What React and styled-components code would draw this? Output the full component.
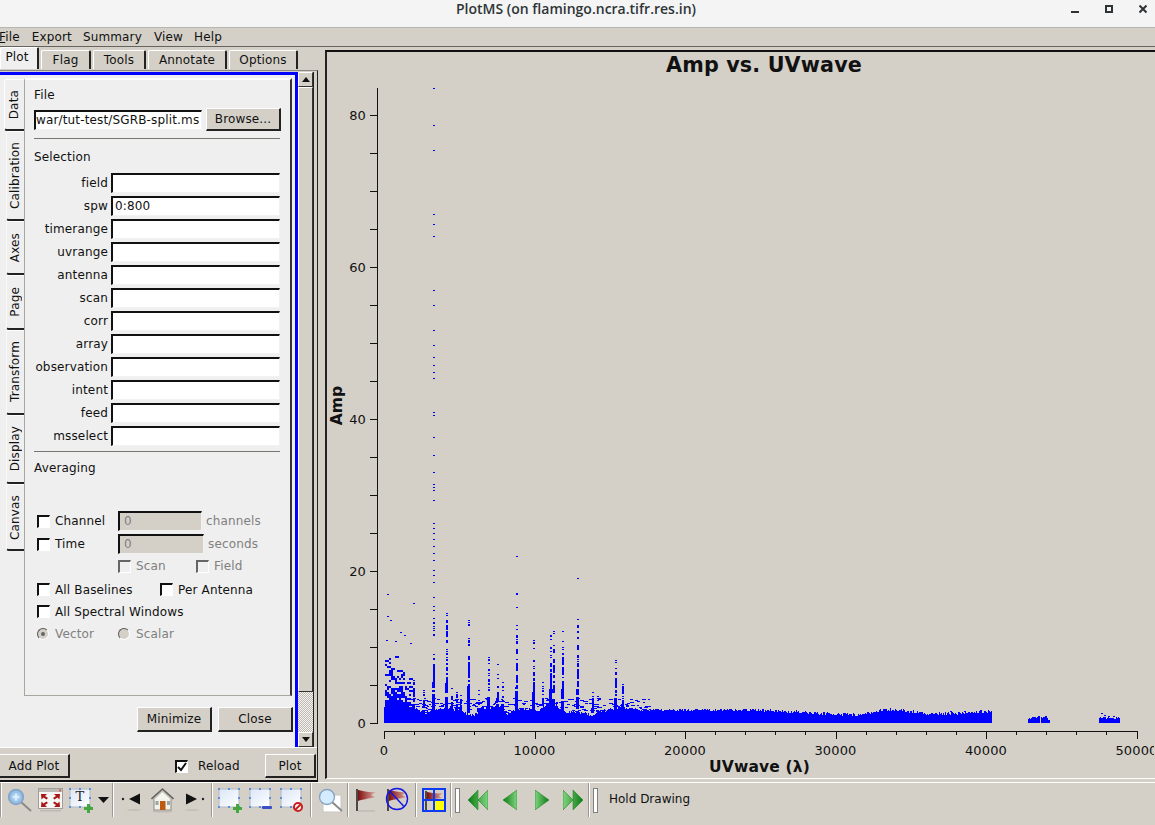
import React from 'react';
import styled, { createGlobalStyle } from 'styled-components';

const Global = createGlobalStyle`
  html, body { margin: 0; padding: 0; background: #d4d0c8; }
  * { box-sizing: border-box; }
`;

const Win = styled.div`
  width: 1155px;
  height: 825px;
  overflow: hidden;
  display: flex;
  flex-direction: column;
  background: #d4d0c8;
  color: #111;
  font: 12px/16px "DejaVu Sans", sans-serif;
  letter-spacing: 0.15px;
`;
const TitleBar = styled.div`
  height: 28px;
  flex: none;
  position: relative;
  background: #f4f4f4;
  border-bottom: 1px solid #b8b6b2;
  display: flex;
  align-items: center;
  justify-content: center;
  padding-bottom: 9px;
  padding-right: 3px;
  font: 600 14px/18px "Open Sans", "Noto Sans", sans-serif;
  letter-spacing: 0;
  color: #2e3436;
`;
const WinControls = styled.div`
  position: absolute;
  right: 8px;
  top: 5px;
  display: flex;
  gap: 26px;
`;
const MenuBar = styled.div`
  height: 19px;
  flex: none;
  display: flex;
  border-bottom: 1px solid #66645f;
  line-height: 18px;
`;
const MenuItem = styled.span`
  margin-left: ${(p) => p.$ml}px;
  u { text-decoration-thickness: 1px; }
`;
const Main = styled.div`
  height: 735px;
  flex: none;
  display: flex;
`;
const LeftCol = styled.div`
  width: 318px;
  flex: none;
  display: flex;
  flex-direction: column;
  border-bottom: 2px solid #111;
`;
const TabStrip = styled.div`
  height: 23px;
  flex: none;
  display: flex;
  align-items: flex-end;
  padding-bottom: 1px;
`;
const HTab = styled.div`
  width: ${(p) => p.$w}px;
  margin-right: 2px;
  height: ${(p) => (p.$active ? 22 : 19)}px;
  background: ${(p) => (p.$active ? '#efefef' : '#d4d0c8')};
  border-top: 1px solid #fff;
  border-left: 1px solid #fff;
  border-right: 2px solid #222;
  border-top-left-radius: 2px;
  border-top-right-radius: 2px;
  text-align: center;
  line-height: 18px;
  padding-bottom: ${(p) => (p.$active ? 3 : 0)}px;
  padding-right: ${(p) => (p.$active ? 4 : 0)}px;
`;
const PlotTabBody = styled.div`
  flex: 1;
  min-height: 0;
  border-top: 1px solid #8a8882;
  border-right: 1px solid #222;
  display: flex;
  flex-direction: column;
`;
const ScrollArea = styled.div`
  height: 675px;
  flex: none;
  display: flex;
  margin-top: 1px;
  margin-right: 3px;
`;
const Viewport = styled.div`
  width: 298px;
  flex: none;
  border-top: 3px solid #0000ff;
  border-right: 3px solid #0000ff;
  background: #efefef;
  display: flex;
  flex-direction: column;
  padding: 3px 3px 0 4px;
`;
const OptionsRow = styled.div`
  display: flex;
  flex: none;
`;
const VTabs = styled.div`
  width: 20px;
  flex: none;
  display: flex;
  flex-direction: column;
  padding-top: 1px;
`;
const VTab = styled.div`
  height: ${(p) => p.$h}px;
  margin-left: ${(p) => (p.$active ? 0 : 2)}px;
  padding-right: ${(p) => (p.$active ? 2 : 1)}px;
  display: flex;
  align-items: center;
  justify-content: center;
  border-left: 1px solid ${(p) => (p.$active ? '#fff' : '#f8f8f8')};
  border-top: 1px solid #fff;
  border-top-left-radius: 3px;
  border-bottom: 2px solid #222;
  border-bottom-left-radius: 3px;
  span {
    writing-mode: vertical-rl;
    transform: rotate(180deg);
    white-space: nowrap;
  }
`;
const Pane = styled.div`
  width: 268px;
  height: 618px;
  flex: none;
  border: 1px solid #a8a69f;
  border-right: 2px solid #333;
  border-top-color: #fff;
  border-top-width: 2px;
  padding: 7px 10px 0 9px;
`;
const Caption = styled.div`
  height: 16px;
  margin-top: ${(p) => p.$mt || 0}px;
`;
const FileRow = styled.div`
  display: flex;
  align-items: center;
  gap: 4px;
  height: 23px;
  margin-top: 5px;
`;
const Sunken = styled.div`
  height: ${(p) => p.$h || 20}px;
  width: ${(p) => (p.$w ? `${p.$w}px` : 'auto')};
  flex: ${(p) => (p.$w ? 'none' : 1)};
  background: ${(p) => (p.$off ? '#d4d0c8' : '#fff')};
  color: ${(p) => (p.$off ? '#808080' : '#111')};
  border-top: 2px solid #111;
  border-left: 2px solid #111;
  border-right: 1px solid #f2f2f2;
  border-bottom: 1px solid #f2f2f2;
  padding-left: ${(p) => p.$pad ?? 2}px;
  line-height: 17px;
  overflow: hidden;
  white-space: nowrap;
`;
const Rule = styled.div`
  height: 1px;
  background: #77756f;
  margin-top: ${(p) => p.$mt}px;
`;
const FieldList = styled.div`
  margin-top: 6px;
`;
const FieldRow = styled.div`
  display: flex;
  align-items: center;
  height: 23px;
`;
const FieldLabel = styled.div`
  width: 74px;
  text-align: right;
  margin-right: 3px;
  flex: none;
`;
const OptRow = styled.div`
  display: flex;
  align-items: center;
  height: ${(p) => p.$h || 22}px;
  margin-top: ${(p) => p.$mt || 0}px;
  padding-left: ${(p) => 3 + (p.$indent || 0)}px;
`;
const Opt = styled.div`
  display: flex;
  align-items: center;
  width: ${(p) => p.$w}px;
  flex: none;
  color: ${(p) => (p.$off ? '#808080' : '#111')};
  padding-top: 1px;
`;
const Check = styled.span`
  width: 13px;
  height: 13px;
  flex: none;
  margin-right: ${(p) => p.$gap ?? 5}px;
  background: ${(p) => (p.$off ? '#efefef' : '#fff')};
  border-top: 2px solid ${(p) => (p.$off ? '#666' : '#111')};
  border-left: 2px solid ${(p) => (p.$off ? '#666' : '#111')};
  border-right: 1px solid #fff;
  border-bottom: 1px solid #fff;
  display: flex;
  align-items: center;
  justify-content: center;
`;
const Radio = styled.span`
  width: 12px;
  height: 12px;
  flex: none;
  margin-right: 6px;
  border-radius: 50%;
  background: #d4d0c8;
  border: 1px solid;
  border-color: #555 #fff #fff #555;
  display: flex;
  align-items: center;
  justify-content: center;
  &::after {
    content: '';
    width: 4px;
    height: 4px;
    border-radius: 50%;
    background: ${(p) => (p.$on ? '#666' : 'transparent')};
  }
`;
const Unit = styled.span`
  margin-left: 4px;
  padding-top: 1px;
  color: #808080;
`;
const PaneButtons = styled.div`
  display: flex;
  justify-content: flex-end;
  gap: 6px;
  margin-top: 11px;
  margin-right: -1px;
`;
const Button = styled.div`
  width: ${(p) => p.$w}px;
  height: ${(p) => p.$h || 25}px;
  flex: none;
  background: #d4d0c8;
  border-top: 1px solid #fff;
  border-left: 1px solid #fff;
  border-right: 2px solid #222;
  border-bottom: 2px solid #222;
  display: flex;
  align-items: center;
  justify-content: center;
`;
const ScrollBar = styled.div`
  width: 16px;
  flex: none;
  display: flex;
  flex-direction: column;
  border-right: 1px solid #222;
  background: repeating-conic-gradient(#bdb9b2 0 25%, #f4f3f0 0 50%) 0 0 / 2px 2px;
`;
const ScrollBtn = styled.div`
  height: 15px;
  flex: none;
  background: #d4d0c8;
  border-top: 1px solid #fff;
  border-left: 1px solid #fff;
  border-right: 1px solid #333;
  border-bottom: 1px solid #333;
  display: flex;
  align-items: center;
  justify-content: center;
`;
const ScrollThumb = styled.div`
  height: 605px;
  flex: none;
  background: #d4d0c8;
  border-top: 1px solid #fff;
  border-left: 1px solid #fff;
  border-right: 1px solid #333;
  border-bottom: 1px solid #333;
`;
const ScrollTrack = styled.div`
  flex: 1;
`;
const BottomRow = styled.div`
  flex: 1;
  min-height: 0;
  border-top: 1px solid #fff;
  display: flex;
  align-items: flex-start;
  padding-top: 6px;
  margin-left: -1px;
`;
const ReloadGroup = styled.div`
  display: flex;
  align-items: center;
  height: 24px;
  margin-left: 105px;
  width: 90px;
`;
const Gutter = styled.div`
  width: 7px;
  flex: none;
`;
const PlotFrame = styled.div`
  flex: 1;
  min-width: 0;
  margin-top: 3px;
  height: 729px;
  border-top: 2px solid #111;
  border-left: 2px solid #222;
  border-bottom: 1px solid #fff;
  overflow: hidden;
  svg { display: block; }
`;
const Toolbar = styled.div`
  height: 43px;
  flex: none;
  border-top: 1px solid #fff;
  display: flex;
  align-items: flex-start;
`;
const Slot = styled.div`
  width: ${(p) => p.$w}px;
  height: 34px;
  flex: none;
  display: flex;
  align-items: center;
  justify-content: center;
`;
const Divider = styled.div`
  width: 1px;
  height: 34px;
  background: #fff;
  box-shadow: -1px 0 0 #9a9890;
`;
const Grip = styled.div`
  width: 5px;
  height: 25px;
  border: 1px solid #808080;
  background: #fff;
`;
const HoldLabel = styled.div`
  margin-left: 9px;
  height: 34px;
  line-height: 33px;
  letter-spacing: 0;
`;
const GradientDefs = styled.svg`
  position: absolute;
  width: 0;
  height: 0;
`;

// chart data, made from a seeded generator so every render draws the same dots
const rng = (seed) => () => {
  seed = (seed + 0x6d2b79f5) | 0;
  let t = Math.imul(seed ^ (seed >>> 15), 1 | seed);
  t = (t + Math.imul(t ^ (t >>> 7), 61 | t)) ^ t;
  return ((t ^ (t >>> 14)) >>> 0) / 4294967296;
};

const ENV = [
  [384, 706], [387, 700], [400, 701], [405, 704], [414, 709], [425, 713], [432, 710], [446, 708], [460, 712],
  [470, 715], [476, 714], [480, 708], [500, 707], [505, 714], [512, 712], [520, 709], [540, 710], [546, 703],
  [555, 705], [565, 712], [585, 713], [590, 715], [610, 709], [620, 708], [640, 710], [670, 710],
  [700, 710], [750, 710], [800, 712], [830, 714], [850, 715], [870, 713], [885, 709], [905, 711],
  [930, 714], [960, 713], [975, 712], [992, 711],
];
const envAt = (x) => {
  for (let i = 1; i < ENV.length; i++) {
    if (x <= ENV[i][0]) {
      const [x0, y0] = ENV[i - 1];
      const [x1, y1] = ENV[i];
      return y0 + ((y1 - y0) * (x - x0)) / (x1 - x0);
    }
  }
  return 714;
};

const SPIKES = [
  [433, 606], [446, 613], [451, 688], [456, 692], [468, 620], [488, 657], [497, 664], [502, 682],
  [516, 625], [533, 640], [542, 682], [550, 635], [553, 631], [562, 631], [577, 625], [592, 692],
  [597, 696], [615, 660], [622, 684], [478, 690], [413, 680], [423, 690], [460, 695],
];
const LONE = [
  [433, 88], [433, 125], [433, 150], [433, 214], [433, 224], [433, 236], [433, 290], [433, 305],
  [433, 330], [433, 345], [433, 357], [433, 365], [433, 372], [433, 378], [433, 412], [433, 415],
  [433, 437], [433, 455], [433, 472], [433, 484], [433, 487], [433, 490], [433, 500], [433, 523],
  [433, 528], [433, 533], [433, 539], [433, 546], [433, 553], [433, 560], [433, 570], [433, 575],
  [433, 582], [433, 597], [516, 556], [516, 593], [516, 594], [516, 607], [577, 578], [577, 619],
  [387, 594], [387, 616], [390, 620], [386, 640], [413, 603], [400, 632], [404, 635], [410, 643],
  [395, 641], [446, 620], [446, 628], [468, 657], [446, 640],
];

const buildPoints = () => {
  const r = rng(20240611);
  let d = '';
  const dot = (x, y, h = 1, w = 2) => {
    d += `M${x} ${y}h${w}v${h}h-${w}z`;
  };
  for (let x = 384; x < 992; x++) {
    const top = Math.round(envAt(x) + (r() - 0.5) * 3);
    d += `M${x} ${top}h1V723h-1z`;
  }
  for (let x = 1028; x < 1050; x++) {
    const top = 716 + Math.round(r() * 2) + (x < 1031 || x > 1047 ? 2 : 0);
    if (x !== 1040) d += `M${x} ${top}h1V723h-1z`;
  }
  for (let x = 1099; x < 1120; x++) {
    const top = 717 + Math.round(r() * 2);
    d += `M${x} ${top}h1V723h-1z`;
  }
  [[1101, 713], [1104, 715], [1108, 716], [1113, 716], [950, 711], [964, 711], [990, 712]].forEach(([x, y]) => dot(x, y));
  // the crowded low baselines on the left edge
  for (let x = 385; x < 412; x += 2) {
    for (let y = 644; y < 706; y += 2) {
      const p = Math.pow((y - 644) / 62, 1.7) * (x < 405 ? 0.9 : 0.4);
      if (r() < p) dot(x, y, 2, r() < 0.3 ? 4 : 2);
    }
  }
  SPIKES.forEach(([x, top]) => {
    for (let y = top; y < 712; y += 2) {
      const t = (y - top) / (712 - top);
      if (r() < 0.4 + 0.6 * t) dot(x - (t > 0.7 ? 1 : 0), y, r() < 0.3 + t ? 2 : 1, t > 0.7 ? 3 : 2);
    }
    dot(x, top);
  });
  for (let i = 0; i < 260; i++) {
    const x = 410 + Math.round(r() * 240);
    dot(x, 698 + Math.round(r() * 14), 1, 2 + Math.round(r() * 2));
  }
  LONE.forEach(([x, y]) => dot(x, y));
  return d;
};
const POINTS = buildPoints();

const X0 = 384;
const XS = 0.01505;
const yAt = (v) => 723 - v * 7.6;

const ScatterPlot = () => {
  const xMinor = Array.from({ length: 26 }, (_, i) => i * 2000);
  const yMinor = Array.from({ length: 17 }, (_, i) => i * 5);
  return (
    <svg width="827" height="726" viewBox="327 52 827 726" fontFamily="'DejaVu Sans', sans-serif" fill="#111">
      <text x="764" y="72" textAnchor="middle" fontSize="20.7" fontWeight="700">Amp vs. UVwave</text>
      <path d={POINTS} fill="#0000ff" shapeRendering="crispEdges" />
      <g stroke="#111" strokeWidth="1" shapeRendering="crispEdges">
        <path d="M377.5 88V723.5M384 731.5H1137" fill="none" />
        {yMinor.map((v) => (
          <line key={v} x1={370} x2={377} y1={Math.round(yAt(v)) + 0.5} y2={Math.round(yAt(v)) + 0.5} />
        ))}
        {xMinor.map((v) => (
          <line
            key={v}
            x1={Math.round(X0 + v * XS) + 0.5}
            x2={Math.round(X0 + v * XS) + 0.5}
            y1={731}
            y2={v % 10000 === 0 ? 739 : 735}
          />
        ))}
      </g>
      {[0, 20, 40, 60, 80].map((v) => (
        <text key={v} x="366" y={yAt(v) + 5} textAnchor="end" fontSize="13">{v}</text>
      ))}
      {[0, 10000, 20000, 30000, 40000, 50000].map((v) => (
        <text key={v} x={X0 + v * XS} y="755" textAnchor="middle" fontSize="13">{v}</text>
      ))}
      <text x="759.5" y="772" textAnchor="middle" fontSize="15.5" fontWeight="700">UVwave (λ)</text>
      <text transform="translate(342 405.5) rotate(-90)" textAnchor="middle" fontSize="15.5" fontWeight="700">Amp</text>
    </svg>
  );
};

const Icon = ({ w = 26, h = 26, children }) => (
  <svg width={w} height={h} viewBox={`0 0 ${w} ${h}`}>{children}</svg>
);

const Defs = () => (
  <GradientDefs>
    <defs>
      <linearGradient id="greenL" x1="0" y1="0" x2="1" y2="0">
        <stop offset="0" stopColor="#0d7a12" />
        <stop offset="1" stopColor="#7fd47f" />
      </linearGradient>
      <linearGradient id="greenR" x1="0" y1="0" x2="1" y2="0">
        <stop offset="0" stopColor="#7fd47f" />
        <stop offset="1" stopColor="#0d7a12" />
      </linearGradient>
      <linearGradient id="flagRed" x1="0" y1="0" x2="1" y2="0">
        <stop offset="0" stopColor="#7d0f0f" />
        <stop offset="1" stopColor="#e0a8a0" />
      </linearGradient>
      <radialGradient id="lens" cx="0.5" cy="0.5" r="0.6">
        <stop offset="0" stopColor="#cfe8fb" />
        <stop offset="1" stopColor="#6ea3d8" />
      </radialGradient>
      <linearGradient id="paper" x1="0" y1="0" x2="1" y2="1">
        <stop offset="0" stopColor="#dbe6f8" />
        <stop offset="1" stopColor="#ffffff" />
      </linearGradient>
    </defs>
  </GradientDefs>
);

const Magnifier = ({ pale }) => (
  <Icon>
    {pale && <rect x="6" y="8" width="18" height="17" fill="#fff" stroke="#c8c6c0" />}
    <line x1="15" y1="15" x2="25" y2="24" stroke="#8a8a88" strokeWidth="2" />
    <circle cx="10" cy="10" r="7.5" fill={pale ? '#d4ecff' : 'url(#lens)'} stroke="#88a4c2" strokeWidth="1.4" />
    {!pale && <path d="M10 6.5v7M6.5 10h7" stroke="#e4f2ff" strokeWidth="1.6" />}
  </Icon>
);

const ExpandArrows = () => (
  <Icon w={25}>
    <rect x="0.5" y="1.5" width="24" height="20" fill="#f6f6f4" stroke="#a09e98" />
    <rect x="1" y="2" width="23" height="3" fill="#bdbbb6" />
    <rect x="21" y="2.5" width="2" height="2" fill="#d75c5c" />
    <g fill="#a81616">
      <path d="M3 7h6l-2 2 3 2-1.5 1.5-3-2-2 2zM22 7h-6l2 2-3 2 1.5 1.5 3-2 2 2zM3 20h6l-2-2 3-2-1.5-1.5-3 2-2-2zM22 20h-6l2-2-3-2 1.5-1.5 3 2 2-2z" />
    </g>
    <rect x="2" y="23" width="21" height="1.5" fill="#bdbab3" />
  </Icon>
);

const Selection = ({ children }) => (
  <Icon>
    <rect x="2" y="2" width="20" height="18" fill="url(#paper)" stroke="#b4b8c0" />
    <g fill="#5a90d8">
      <rect x="1" y="1" width="2" height="2" />
      <rect x="11" y="1" width="2" height="2" />
      <rect x="21" y="1" width="2" height="2" />
      <rect x="1" y="10" width="2" height="2" />
      <rect x="21" y="10" width="2" height="2" />
      <rect x="1" y="19" width="2" height="2" />
      <rect x="11" y="19" width="2" height="2" />
      <rect x="21" y="19" width="2" height="2" />
    </g>
    {children}
  </Icon>
);
const PlusMark = () => <path d="M16 20h3v-3h3v3h3v3h-3v3h-3v-3h-3z" fill="#45a83f" />;

const Triangle = () => (
  <Icon w={11} h={7}><path d="M0 0h11L5.5 6z" fill="#111" /></Icon>
);

const BackArrow = () => (
  <Icon w={20} h={26}>
    <circle cx="2" cy="12" r="1.2" fill="#222" />
    <path d="M8 12l11-5.5v11z" fill="#111" />
    <ellipse cx="13" cy="23" rx="7" ry="1" fill="#c4c1b9" />
  </Icon>
);
const ForwardArrow = () => (
  <Icon w={20} h={26}>
    <circle cx="18" cy="12" r="1.2" fill="#222" />
    <path d="M12 12L1 6.5v11z" fill="#111" />
    <ellipse cx="7" cy="23" rx="7" ry="1" fill="#c4c1b9" />
  </Icon>
);
const Home = () => (
  <Icon w={23}>
    <rect x="3" y="11" width="17" height="12" fill="#f3f1e9" stroke="#8c8a82" />
    <path d="M0.5 12L11.5 2l11 10" fill="#c4c2bb" stroke="#66645e" strokeWidth="1.6" />
    <path d="M4 12l7.5-7 7.5 7z" fill="#f6f5ee" />
    <rect x="9" y="14" width="5.5" height="9" fill="#bb5a10" />
    <rect x="4.5" y="14" width="3" height="4" fill="#9aa5a8" />
    <rect x="16" y="14" width="3" height="4" fill="#9aa5a8" />
    <ellipse cx="11.5" cy="24.5" rx="10" ry="1" fill="#bdbab3" />
  </Icon>
);

const FlagShape = ({ x = 1 }) => (
  <g transform={`translate(${x} 0)`}>
    <rect x="0" y="2" width="2" height="22" fill="#4c4a46" />
    <path d="M2 3C8 4 14 6 20 5L15 8L19 10C12 12 8 12 2 14z" fill="url(#flagRed)" />
  </g>
);
const Flag = () => (
  <Icon w={22}>
    <FlagShape />
    <rect x="3" y="23" width="17" height="2" fill="#c4c1b9" />
  </Icon>
);
const Unflag = () => (
  <Icon w={24}>
    <FlagShape x={2} />
    <circle cx="12" cy="12" r="10.5" fill="none" stroke="#1414e6" strokeWidth="1.4" />
    <line x1="5" y1="4.5" x2="19" y2="19.5" stroke="#1414e6" strokeWidth="1.4" />
  </Icon>
);
const FlagGrid = () => (
  <Icon w={24} h={24}>
    <rect x="1" y="1" width="22" height="22" fill="#d4d0c8" />
    <rect x="13" y="13" width="9" height="9" fill="#ffff00" />
    <rect x="3" y="3" width="2" height="19" fill="#4c4a46" />
    <path d="M5 4C10 5 16 6 21 5L17 8L20 10C14 11 10 11 5 11z" fill="url(#flagRed)" />
    <path d="M1 1h22v22H1zM12 1v22M1 12h22" fill="none" stroke="#0d3bf0" strokeWidth="2" />
  </Icon>
);

const Green = ({ w, d, right }) => (
  <Icon w={w} h={20}>
    <path d={d} fill={right ? 'url(#greenR)' : 'url(#greenL)'} stroke="#1d8a22" strokeWidth="0.6" />
  </Icon>
);

const Field = ({ label, value }) => (
  <FieldRow>
    <FieldLabel>{label}</FieldLabel>
    <Sunken>{value}</Sunken>
  </FieldRow>
);

const Tick = () => (
  <svg width="10" height="10" viewBox="0 0 10 10"><path d="M1 5l3 3 5-7" fill="none" stroke="#111" strokeWidth="2" /></svg>
);

const FIELDS = ['field', 'spw', 'timerange', 'uvrange', 'antenna', 'scan', 'corr', 'array', 'observation', 'intent', 'feed', 'msselect'];
const VTABS = [
  ['Data', 52], ['Calibration', 90], ['Axes', 54], ['Page', 55], ['Transform', 85], ['Display', 69], ['Canvas', 67],
];

export default function App() {
  return (
    <Win>
      <Global />
      <Defs />
      <TitleBar>
        PlotMS (on flamingo.ncra.tifr.res.in)
        <WinControls>
          <svg width="8" height="9"><rect y="6" width="8" height="2" fill="#2e3436" /></svg>
          <svg width="8" height="9"><rect x="1" y="1" width="6" height="6" fill="none" stroke="#2e3436" strokeWidth="2" /></svg>
          <svg width="8" height="9"><path d="M0.5 0.5l7 7M7.5 0.5l-7 7" stroke="#2e3436" strokeWidth="2" /></svg>
        </WinControls>
      </TitleBar>
      <MenuBar>
        <MenuItem $ml={-1}><u>F</u>ile</MenuItem>
        <MenuItem $ml={12}>Export</MenuItem>
        <MenuItem $ml={11}>Summary</MenuItem>
        <MenuItem $ml={12}>View</MenuItem>
        <MenuItem $ml={11}>Help</MenuItem>
      </MenuBar>
      <Main>
        <LeftCol>
          <TabStrip>
            <HTab $active $w={39}>Plot</HTab>
            <HTab $w={50}>Flag</HTab>
            <HTab $w={53}>Tools</HTab>
            <HTab $w={79}>Annotate</HTab>
            <HTab $w={69}>Options</HTab>
          </TabStrip>
          <PlotTabBody>
            <ScrollArea>
              <Viewport>
                <OptionsRow>
                  <VTabs>
                    {VTABS.map(([name, h], i) => (
                      <VTab key={name} $h={h} $active={i === 0}>
                        <span>{name}</span>
                      </VTab>
                    ))}
                  </VTabs>
                  <Pane>
                    <Caption>File</Caption>
                    <FileRow>
                      <Sunken $w={168} $h={20} $pad={0}>war/tut-test/SGRB-split.ms</Sunken>
                      <Button $w={75} $h={23}>Browse...</Button>
                    </FileRow>
                    <Rule $mt={7} />
                    <Caption $mt={10}>Selection</Caption>
                    <FieldList>
                      {FIELDS.map((f) => (
                        <Field key={f} label={f} value={f === 'spw' ? '0:800' : ''} />
                      ))}
                    </FieldList>
                    <Rule $mt={4} />
                    <Caption $mt={8}>Averaging</Caption>
                    <OptRow $h={23} $mt={33}>
                      <Opt $w={81}><Check />Channel</Opt>
                      <Sunken $w={84} $off $pad={4}>0</Sunken>
                      <Unit>channels</Unit>
                    </OptRow>
                    <OptRow $h={23}>
                      <Opt $w={81}><Check />Time</Opt>
                      <Sunken $w={86} $off $pad={4}>0</Sunken>
                      <Unit>seconds</Unit>
                    </OptRow>
                    <OptRow $h={21} $indent={81}>
                      <Opt $w={78} $off><Check $off />Scan</Opt>
                      <Opt $w={60} $off><Check $off />Field</Opt>
                    </OptRow>
                    <OptRow $mt={2}>
                      <Opt $w={123}><Check />All Baselines</Opt>
                      <Opt $w={100}><Check />Per Antenna</Opt>
                    </OptRow>
                    <OptRow>
                      <Opt $w={200}><Check />All Spectral Windows</Opt>
                    </OptRow>
                    <OptRow>
                      <Opt $w={81} $off><Radio $on />Vector</Opt>
                      <Opt $w={80} $off><Radio />Scalar</Opt>
                    </OptRow>
                  </Pane>
                </OptionsRow>
                <PaneButtons>
                  <Button $w={75}>Minimize</Button>
                  <Button $w={75}>Close</Button>
                </PaneButtons>
              </Viewport>
              <ScrollBar>
                <ScrollBtn>
                  <svg width="8" height="5"><path d="M0 5h8L4 0z" fill="#111" /></svg>
                </ScrollBtn>
                <ScrollThumb />
                <ScrollTrack />
                <ScrollBtn>
                  <svg width="8" height="5"><path d="M0 0h8L4 5z" fill="#111" /></svg>
                </ScrollBtn>
              </ScrollBar>
            </ScrollArea>
            <BottomRow>
              <Button $w={71} $h={24}>Add Plot</Button>
              <ReloadGroup>
                <Check $gap={10}><Tick /></Check>
                Reload
              </ReloadGroup>
              <Button $w={51} $h={24}>Plot</Button>
            </BottomRow>
          </PlotTabBody>
        </LeftCol>
        <Gutter />
        <PlotFrame>
          <ScatterPlot />
        </PlotFrame>
      </Main>
      <Toolbar>
        <Slot $w={3}><Divider /></Slot>
        <Slot $w={32}><Magnifier /></Slot>
        <Slot $w={31}><ExpandArrows /></Slot>
        <Slot $w={30}><Selection><text x="12" y="14" textAnchor="middle" fontSize="13" fontFamily="'DejaVu Serif', serif" fill="#222">T</text><PlusMark /></Selection></Slot>
        <Slot $w={14}><Triangle /></Slot>
        <Slot $w={6}><Divider /></Slot>
        <Slot $w={29}><BackArrow /></Slot>
        <Slot $w={35}><Home /></Slot>
        <Slot $w={30}><ForwardArrow /></Slot>
        <Slot $w={5}><Divider /></Slot>
        <Slot $w={30}><Selection><PlusMark /></Selection></Slot>
        <Slot $w={31}><Selection><rect x="14" y="19" width="10" height="3" rx="1" fill="#3a4fc4" /></Selection></Slot>
        <Slot $w={32}><Selection><circle cx="19" cy="20" r="4" fill="#fff" stroke="#c81e1e" strokeWidth="2" /><line x1="16.5" y1="22.5" x2="21.5" y2="17.5" stroke="#c81e1e" strokeWidth="2" /></Selection></Slot>
        <Slot $w={6}><Divider /></Slot>
        <Slot $w={31}><Magnifier pale /></Slot>
        <Slot $w={6}><Divider /></Slot>
        <Slot $w={30}><Flag /></Slot>
        <Slot $w={32}><Unflag /></Slot>
        <Slot $w={6}><Divider /></Slot>
        <Slot $w={29}><FlagGrid /></Slot>
        <Slot $w={6}><Divider /></Slot>
        <Slot $w={7}><Grip /></Slot>
        <Slot $w={33}><Green w={20} right={false} d="M0 10L10 0v20zM10 10L20 0v20z" /></Slot>
        <Slot $w={32}><Green w={14} right={false} d="M0 10L14 0v20z" /></Slot>
        <Slot $w={32}><Green w={14} right d="M14 10L0 0v20z" /></Slot>
        <Slot $w={29}><Green w={20} right d="M10 10L0 0v20zM20 10L10 0v20z" /></Slot>
        <Slot $w={4}><Divider /></Slot>
        <Slot $w={9}><Grip /></Slot>
        <HoldLabel>Hold Drawing</HoldLabel>
      </Toolbar>
    </Win>
  );
}
